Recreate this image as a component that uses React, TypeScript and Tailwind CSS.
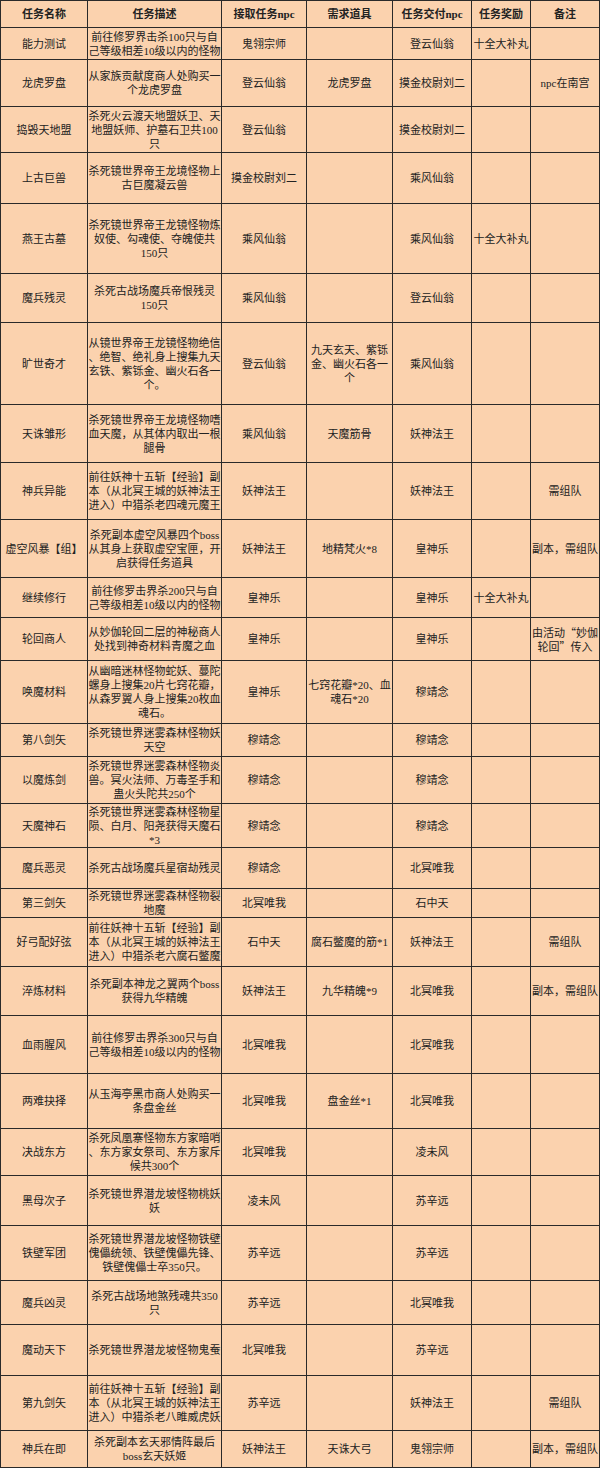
import type { ReactNode } from "react";

const cols = [
  "w-[87px]",
  "w-[134px]",
  "w-[85px]",
  "w-[86px]",
  "w-[79px]",
  "w-[59px]",
  "w-[69px]",
];

type Row = { h: string; cells: ReactNode[] };

const cjk = { fontFamily: '"Noto Sans CJK SC", sans-serif' };

const header = ["任务名称", "任务描述", "接取任务npc", "需求道具", "任务交付npc", "任务奖励", "备注"];

const rows: Row[] = [
  { h: "h-[32px]", cells: ["能力测试", "前往修罗界击杀100只与自\n己等级相差10级以内的怪物", "鬼翎宗师", "", "登云仙翁", "十全大补丸", ""] },
  { h: "h-[47px]", cells: ["龙虎罗盘", "从家族贡献度商人处购买一\n个龙虎罗盘", "登云仙翁", "龙虎罗盘", "摸金校尉刘二", "", "npc在南宫"] },
  { h: "h-[46px]", cells: ["捣毁天地盟", "杀死火云渡天地盟妖卫、天\n地盟妖师、护墓石卫共100\n只", "登云仙翁", "", "摸金校尉刘二", "", ""] },
  { h: "h-[51px]", cells: ["上古巨兽", "杀死镜世界帝王龙境怪物上\n古巨魔凝云兽", "摸金校尉刘二", "", "乘风仙翁", "", ""] },
  { h: "h-[70px]", cells: ["燕王古墓", "杀死镜世界帝王龙镜怪物炼\n奴使、勾魂使、夺魄使共\n150只", "乘风仙翁", "", "乘风仙翁", "十全大补丸", ""] },
  { h: "h-[49px]", cells: ["魔兵残灵", "杀死古战场魔兵帝恨残灵\n150只", "乘风仙翁", "", "登云仙翁", "", ""] },
  { h: "h-[82px]", cells: ["旷世奇才", "从镜世界帝王龙镜怪物绝信\n、绝智、绝礼身上搜集九天\n玄铁、紫铄金、幽火石各一\n个。", "登云仙翁", "九天玄天、紫铄\n金、幽火石各一\n个", "乘风仙翁", "", ""] },
  { h: "h-[58px]", cells: ["天诛雏形", "杀死镜世界帝王龙境怪物嗜\n血天魔，从其体内取出一根\n腿骨", "乘风仙翁", "天魔筋骨", "妖神法王", "", ""] },
  { h: "h-[57px]", cells: ["神兵异能", "前往妖神十五斩【经验】副\n本（从北冥王城的妖神法王\n进入）中猎杀老四魂元魔王", "妖神法王", "", "妖神法王", "", "需组队"] },
  { h: "h-[58px]", cells: ["虚空风暴【组】", "杀死副本虚空风暴四个boss\n从其身上获取虚空宝匣，开\n启获得任务道具", "妖神法王", "地精梵火*8", "皇神乐", "", "副本，需组队"] },
  { h: "h-[40px]", cells: ["继续修行", "前往修罗击界杀200只与自\n己等级相差10级以内的怪物", "皇神乐", "", "皇神乐", "十全大补丸", ""] },
  {
    h: "h-[43px]",
    cells: [
      "轮回商人",
      "从妙伽轮回二层的神秘商人\n处找到神奇材料青魔之血",
      "皇神乐",
      "",
      "皇神乐",
      "",
      <span style={cjk}>{"由活动“妙伽\n轮回”传入"}</span>,
    ],
  },
  { h: "h-[63px]", cells: ["唤魔材料", "从幽暗迷林怪物蛇妖、蔓陀\n螺身上搜集20片七窍花瓣，\n从森罗翼人身上搜集20枚血\n魂石。", "皇神乐", "七窍花瓣*20、血\n魂石*20", "穆靖念", "", ""] },
  { h: "h-[33px]", cells: ["第八剑矢", "杀死镜世界迷雾森林怪物妖\n天空", "穆靖念", "", "穆靖念", "", ""] },
  { h: "h-[47px]", cells: ["以魔炼剑", "杀死镜世界迷雾森林怪物炎\n兽。冥火法师、万毒圣手和\n蛊火头陀共250个", "穆靖念", "", "穆靖念", "", ""] },
  { h: "h-[44px]", cells: ["天魔神石", "杀死镜世界迷雾森林怪物星\n陨、白月、阳尧获得天魔石\n*3", "穆靖念", "", "穆靖念", "", ""] },
  { h: "h-[41px]", cells: ["魔兵恶灵", "杀死古战场魔兵星宿劫残灵", "穆靖念", "", "北冥唯我", "", ""] },
  { h: "h-[29px]", cells: ["第三剑矢", "杀死镜世界迷雾森林怪物裂\n地魔", "北冥唯我", "", "石中天", "", ""] },
  { h: "h-[49px]", cells: ["好弓配好弦", "前往妖神十五斩【经验】副\n本（从北冥王城的妖神法王\n进入）中猎杀老六腐石鳖魔", "石中天", "腐石鳖魔的筋*1", "妖神法王", "", "需组队"] },
  { h: "h-[49px]", cells: ["淬炼材料", "杀死副本神龙之翼两个boss\n获得九华精魄", "妖神法王", "九华精魄*9", "北冥唯我", "", "副本，需组队"] },
  { h: "h-[58px]", cells: ["血雨腥风", "前往修罗击界杀300只与自\n己等级相差10级以内的怪物", "北冥唯我", "", "北冥唯我", "", ""] },
  { h: "h-[55px]", cells: ["两难抉择", "从玉海亭黑市商人处购买一\n条盘金丝", "北冥唯我", "盘金丝*1", "北冥唯我", "", ""] },
  { h: "h-[47px]", cells: ["决战东方", "杀死凤凰寨怪物东方家暗哨\n、东方家女祭司、东方家斥\n候共300个", "北冥唯我", "", "凌未风", "", ""] },
  { h: "h-[50px]", cells: ["黑母次子", "杀死镜世界潜龙坡怪物桃妖\n妖", "凌未风", "", "苏辛远", "", ""] },
  { h: "h-[55px]", cells: ["铁壁军团", "杀死镜世界潜龙坡怪物铁壁\n傀儡统领、铁壁傀儡先锋、\n铁壁傀儡士卒350只。", "苏辛远", "", "苏辛远", "", ""] },
  { h: "h-[44px]", cells: ["魔兵凶灵", "杀死古战场地煞残魂共350\n只", "苏辛远", "", "北冥唯我", "", ""] },
  { h: "h-[51px]", cells: ["魔动天下", "杀死镜世界潜龙坡怪物鬼蚕", "北冥唯我", "", "苏辛远", "", ""] },
  { h: "h-[55px]", cells: ["第九剑矢", "前往妖神十五斩【经验】副\n本（从北冥王城的妖神法王\n进入）中猎杀老八睢威虎妖", "苏辛远", "", "妖神法王", "", "需组队"] },
  { h: "h-[37px]", cells: ["神兵在即", "杀死副本玄天邪情阵最后\nboss玄天妖姬", "妖神法王", "天诛大弓", "鬼翎宗师", "", "副本，需组队"] },
];

const TaskRow = ({ h, cells, bold }: { h: string; cells: ReactNode[]; bold?: boolean }) => (
  <div className={`flex ${h} border-b border-[#2a2a2a]`}>
    {cells.map((text, i) => (
      <div
        key={i}
        className={`${cols[i]} flex shrink-0 items-center justify-center whitespace-pre border-r border-[#2a2a2a] text-center leading-[14px] ${bold ? "font-bold" : ""}`}
      >
        {text}
      </div>
    ))}
  </div>
);

export default function App() {
  return (
    <div className="min-h-screen bg-white">
      <div
        className="w-[600px] border-l border-t border-[#2a2a2a] bg-[#fbd2ae] text-[11px] text-[#222]"
        style={{ fontFamily: '"Liberation Serif", "Noto Sans CJK SC", serif' }}
      >
        <TaskRow h="h-[27px]" cells={header} bold />
        {rows.map((r, i) => (
          <TaskRow key={i} h={r.h} cells={r.cells} />
        ))}
      </div>
    </div>
  );
}
